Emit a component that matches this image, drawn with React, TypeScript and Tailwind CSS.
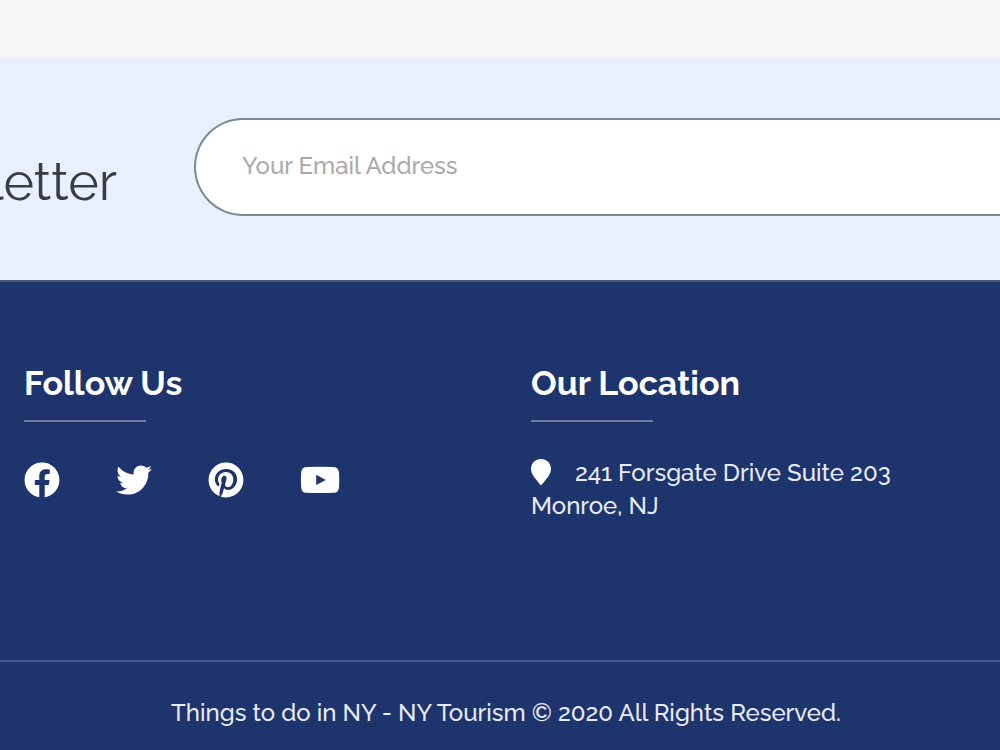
import type { ReactNode } from "react";
import { FaFacebook, FaPinterest, FaTwitter } from "react-icons/fa";

function YoutubeIcon() {
  return (
    <svg viewBox="0 0 40 28" className="h-7 w-10" fill="currentColor" aria-hidden="true">
      <path
        fillRule="evenodd"
        d="M6.500 1Q20 .4 33.500 1C37 1.200 38.700 3 39 6.500Q39.600 14 39 21.500C38.700 25 37 26.600 33.500 26.800Q20 27.400 6.500 26.800C3 26.600 1.400 25 1.200 21.500Q.6 14 1.200 6.500C1.400 3 3 1.200 6.500 1ZM16.200 8.800V19L25.800 13.900Z"
      />
    </svg>
  );
}

function PinIcon() {
  return (
    <svg viewBox="0 0 20 26" className="inline-block h-[26px] w-5 align-[-4px]" fill="currentColor" aria-hidden="true">
      <path d="M10 0C4.300 0 0 4.300 0 9.900C0 13.500 2.200 16.900 5.100 20.400L8.600 25Q10 26.800 11.400 25L14.900 20.400C17.800 16.900 20 13.500 20 9.900C20 4.300 15.700 0 10 0Z" />
    </svg>
  );
}

const socials: { name: string; icon: ReactNode }[] = [
  { name: "Facebook", icon: <FaFacebook size={36} /> },
  { name: "Twitter", icon: <FaTwitter size={36} /> },
  { name: "Pinterest", icon: <FaPinterest size={36} /> },
  { name: "YouTube", icon: <YoutubeIcon /> },
];

function FooterColumn({ title, children }: { title: string; children: ReactNode }) {
  return (
    <section>
      <h2 className="text-[34px] leading-[42px] font-bold text-white">{title}</h2>
      <div className="mt-4 h-0.5 w-[122px] bg-[#6d7ba5]" />
      {children}
    </section>
  );
}

export default function App() {
  return (
    <div className="min-h-screen overflow-x-hidden bg-[#f6f6f6] pt-[58px] font-['Raleway','Lato',sans-serif] oldstyle-nums">
      <form className="flex items-start border-b-2 border-[#495577] bg-[#e8effe] pt-[60px] pb-16">
        <div className="flex w-[117px] shrink-0 justify-end pt-[34px]">
          <label htmlFor="email" className="text-[52px] leading-[60px] text-[#3a3d40]">
            Newsletter
          </label>
        </div>
        <input
          id="email"
          type="email"
          placeholder="Your Email Address"
          className="ml-[77px] h-[98px] min-w-0 flex-1 rounded-l-full border-2 border-r-0 border-[#7c898e] bg-white pr-6 pb-1 pl-[46px] text-2xl font-medium text-gray-700 outline-none placeholder:text-[#a9a9a9]"
        />
      </form>

      <footer className="bg-[#1e346d] text-[#e8ecf8]">
        <div className="grid h-[378px] grid-cols-[507px_1fr] pt-20 pl-6">
          <FooterColumn title="Follow Us">
            <ul className="mt-10 flex items-center gap-14 text-white">
              {socials.map(({ name, icon }) => (
                <li key={name}>
                  <a href="#" aria-label={name} className="flex h-9 items-center">
                    {icon}
                  </a>
                </li>
              ))}
            </ul>
          </FooterColumn>
          <FooterColumn title="Our Location">
            <address className="mt-[34px] text-2xl leading-[33px] font-medium not-italic">
              <span className="mr-6 text-white">
                <PinIcon />
              </span>
              241 Forsgate Drive Suite 203
              <br />
              Monroe, NJ
            </address>
          </FooterColumn>
        </div>
        <p className="border-t-2 border-[#45578a] pt-[34px] pb-6 pl-3 text-center text-2xl leading-[33px] font-medium">
          Things to do in NY - NY Tourism © 2020 All Rights Reserved.
        </p>
      </footer>
    </div>
  );
}
